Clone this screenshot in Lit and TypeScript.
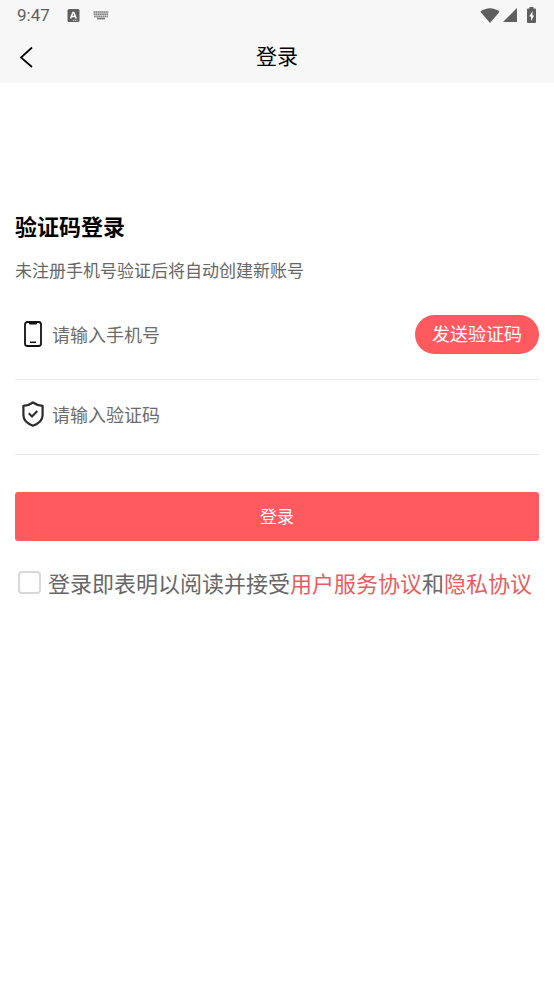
import { LitElement, html, css } from "lit";
import { customElement, state } from "lit/decorators.js";

@customElement("status-bar")
class StatusBar extends LitElement {
  static styles = css`
    :host {
      display: flex;
      align-items: center;
      justify-content: space-between;
      height: 30px;
      padding: 0 17px;
      color: #5f5f5f;
    }
    .group {
      display: flex;
      align-items: center;
    }
    .time {
      font: 17px/30px Roboto, sans-serif;
      margin-right: 17px;
    }
    .keyboard {
      margin-left: 13px;
    }
    .signal {
      margin-left: 3px;
    }
    .battery {
      margin-left: 9px;
    }
    svg {
      display: block;
    }
  `;

  render() {
    return html`
      <div class="group">
        <span class="time">9:47</span>
        <svg width="13" height="13" viewBox="0 0 13 13" aria-hidden="true">
          <rect x="0.5" width="12" height="13" rx="1.5" fill="#5f5f5f" />
          <path d="M3.6 9.4 6 3.4h.9l2.3 6M4.6 7.4h3.6" fill="none" stroke="#fff" stroke-width="1.5" />
          <path d="M6 11.3h4.6" stroke="#ddd" stroke-dasharray="1.2 .6" />
        </svg>
        <svg class="keyboard" width="16" height="9" viewBox="0 0 16 9" aria-hidden="true">
          <path d="M.5 1h15M.8 3.2h14.4M1.2 5.4h13.6" stroke="#777" stroke-width="1.5" stroke-dasharray="1.6 .5" />
          <path d="M.5 0v4.5l1 2h13l1-2V0z" fill="#999" opacity=".3" />
          <path d="M4 7.6h8" stroke="#777" stroke-width="1.6" />
        </svg>
      </div>
      <div class="group">
        <svg width="20" height="15" viewBox="0 0 20 15" aria-hidden="true">
          <path d="M.4 3.8C5.8-1 14.2-1 19.6 3.8L10 15z" fill="#5f5f5f" />
        </svg>
        <svg class="signal" width="14" height="14" viewBox="0 0 14 14" aria-hidden="true">
          <path d="M14 0v14H0z" fill="#5f5f5f" />
        </svg>
        <svg class="battery" width="11" height="16" viewBox="0 0 11 16" aria-hidden="true">
          <path d="M3.5 0h4v1.600H9a1 1 0 0 1 1 1V15a1 1 0 0 1-1 1H2a1 1 0 0 1-1-1V2.600a1 1 0 0 1 1-1h1.500z" fill="#5f5f5f" />
          <path d="M6.600 4 3.200 9.400h1.900V14l3-5.600H6.400z" fill="#fff" />
        </svg>
      </div>
    `;
  }
}

@customElement("app-root")
class AppRoot extends LitElement {
  @state() private accepted = false;

  static styles = css`
    :host {
      display: block;
      min-height: 100vh;
      background: #fff;
      color: #000;
      font-family: "Noto Sans CJK SC", sans-serif;
    }
    * {
      box-sizing: border-box;
    }
    button,
    input {
      font-family: inherit;
      margin: 0;
    }
    button {
      border: 0;
      padding: 0;
      cursor: pointer;
    }
    svg {
      display: block;
    }
    .top {
      background: #f7f7f7;
    }
    .nav {
      display: grid;
      grid-template-columns: 40px 1fr 40px;
      height: 53px;
      padding: 7px 7px 0;
    }
    .back {
      display: grid;
      place-items: center;
      height: 40px;
      background: none;
    }
    .title {
      margin: 0;
      font-size: 21px;
      line-height: 36px;
      font-weight: 400;
      text-align: center;
    }
    main {
      padding: 126px 15px 24px;
    }
    .heading {
      margin: 0;
      font-size: 22px;
      line-height: 32px;
      font-weight: 700;
    }
    .hint {
      margin: 17px 0 0;
      font-size: 17px;
      line-height: 24px;
      color: #666;
    }
    .field {
      display: flex;
      align-items: center;
      border-bottom: 1px solid #e8e8e8;
    }
    .phone {
      margin-top: 32px;
      padding-bottom: 25px;
    }
    .code {
      padding: 14px 0 20px;
    }
    .label {
      display: grid;
      place-items: center;
      flex: none;
      width: 36px;
      height: 40px;
    }
    .input {
      flex: 1;
      min-width: 0;
      height: 40px;
      padding: 0 1px;
      border: 0;
      outline: 0;
      background: none;
      font-size: 18px;
      color: #333;
    }
    .input::placeholder {
      color: #6c6c6c;
      opacity: 1;
    }
    .send {
      flex: none;
      height: 39px;
      padding: 0 17px 2px;
      border-radius: 20px;
      background: #ff5a60;
      color: #fff;
      font-size: 18px;
    }
    .submit {
      display: block;
      width: 100%;
      height: 49px;
      margin-top: 37px;
      padding-bottom: 2px;
      border-radius: 3px;
      background: #ff5a60;
      color: #fff;
      font-size: 17px;
    }
    .agree {
      display: flex;
      align-items: flex-start;
      gap: 7px;
      margin-top: 25px;
      padding-left: 3px;
      font-size: 22px;
      line-height: 32px;
      color: #666;
    }
    .check {
      appearance: none;
      flex: none;
      width: 23px;
      height: 23px;
      margin-top: 5px;
      border: 2px solid #d8d8d8;
      border-radius: 4px;
      background: #fff;
    }
    .check:checked {
      border-color: #ff5a60;
      background: #ff5a60;
    }
    .link {
      color: #e85c60;
      text-decoration: none;
    }
  `;

  render() {
    return html`
      <header class="top">
        <status-bar></status-bar>
        <nav class="nav">
          <button class="back" aria-label="返回">
            <svg width="16" height="22" viewBox="0 0 16 22">
              <path d="M13 1.500 2 11.500 13 21" fill="none" stroke="#000" stroke-width="1.700" />
            </svg>
          </button>
          <h1 class="title">登录</h1>
        </nav>
      </header>
      <main>
        <h2 class="heading">验证码登录</h2>
        <p class="hint">未注册手机号验证后将自动创建新账号</p>
        <form @submit=${(e: Event) => e.preventDefault()}>
          <div class="field phone">
            <label class="label" for="phone" aria-label="手机号">
              <svg width="20" height="26" viewBox="0 0 20 26">
                <rect x="2" y="1" width="16" height="24" rx="2.500" fill="none" stroke="#111" stroke-width="1.800" />
                <path d="M6 1h8v1.500a1 1 0 0 1-1 1H7a1 1 0 0 1-1-1z" fill="#111" />
                <path d="M7 21.300h6" stroke="#111" stroke-width="1.500" />
              </svg>
            </label>
            <input class="input" id="phone" type="tel" placeholder="请输入手机号" />
            <button class="send" type="button">发送验证码</button>
          </div>
          <div class="field code">
            <label class="label" for="code" aria-label="验证码">
              <svg width="22" height="26" viewBox="0 0 22 26" fill="none" stroke="#2b2b2f">
                <path
                  d="M11 1.500C8.500 3.400 5.200 4.600 1.400 4.900V14c0 5 4.200 8.700 9.600 10.700 5.400-2 9.600-5.700 9.600-10.700V4.900C16.800 4.600 13.500 3.400 11 1.500z"
                  stroke-width="2.200"
                  stroke-linejoin="round"
                />
                <path d="m6.800 12.300 3.200 3.200 5.300-5.500" stroke-width="2" />
              </svg>
            </label>
            <input class="input" id="code" type="text" placeholder="请输入验证码" />
          </div>
          <button class="submit" type="submit">登录</button>
          <div class="agree">
            <input
              class="check"
              id="agree"
              type="checkbox"
              .checked=${this.accepted}
              @change=${(e: Event) => (this.accepted = (e.target as HTMLInputElement).checked)}
            />
            <label for="agree"
              >登录即表明以阅读并接受<a class="link" href="#service">用户服务协议</a>和<a class="link" href="#privacy">隐私协议</a></label
            >
          </div>
        </form>
      </main>
    `;
  }
}
